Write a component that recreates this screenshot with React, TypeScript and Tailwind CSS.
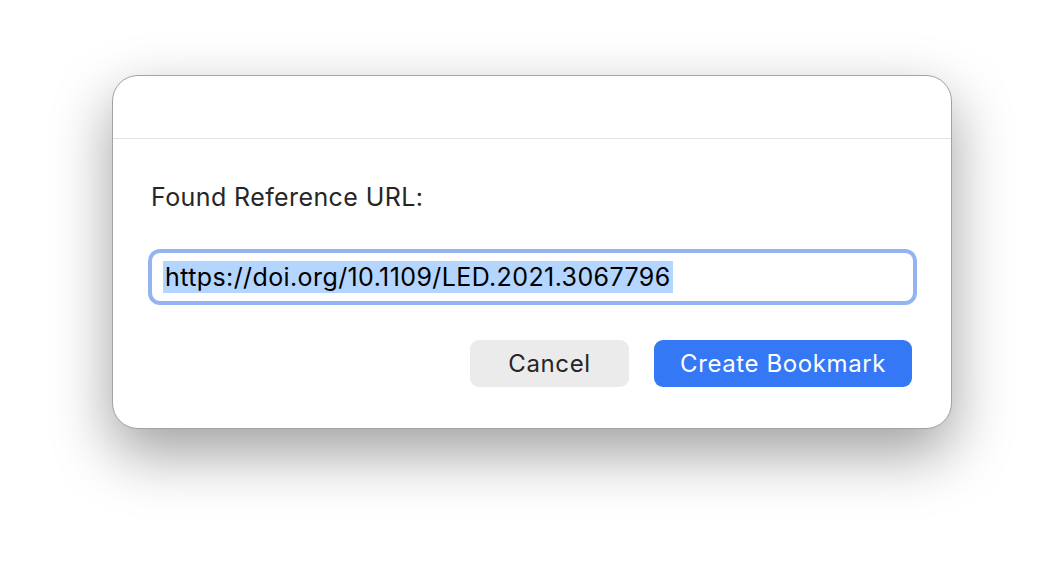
import React from "react";

export default function App() {
  return (
    <div
      className="w-[1064px] h-[576px] bg-white overflow-hidden pl-[112px] pt-[75px]"
      style={{ fontFamily: "Inter, 'Noto Sans', sans-serif" }}
    >
      <div className="w-[840px] h-[354px] bg-white rounded-[26px] border border-[#a3a3a3] shadow-[0_24px_60px_rgba(0,0,0,0.38)] flex flex-col overflow-hidden">
        <div className="h-[63px] shrink-0 border-b border-[#e2e2e2]" />
        <div className="flex flex-col pl-[35px] pr-[34px] pt-[42px]">
          <div className="pl-[3px] text-[25px] leading-[32px] text-[#262626] tracking-[0.4px]">
            Found Reference URL:
          </div>
          <div className="mt-[36px] h-[56px] rounded-[12px] bg-[#93b3f3] p-[4px]">
            <div className="h-full rounded-[8px] bg-white flex items-center px-[11px]">
              <span className="bg-[#b4d5fd] text-[25px] leading-[32px] text-black px-[2px] tracking-[0.4px]">
                https://doi.org/10.1109/LED.2021.3067796
              </span>
            </div>
          </div>
          <div className="mt-[35px] flex justify-end gap-[25px] pr-[5px]">
            <button className="w-[159px] h-[47px] rounded-[9px] bg-[#ebebeb] text-[24px] tracking-[0.6px] text-[#262626]">
              Cancel
            </button>
            <button className="w-[258px] h-[47px] rounded-[9px] bg-[#3478f6] text-[24px] tracking-[0.6px] text-white">
              Create Bookmark
            </button>
          </div>
        </div>
      </div>
    </div>
  );
}
